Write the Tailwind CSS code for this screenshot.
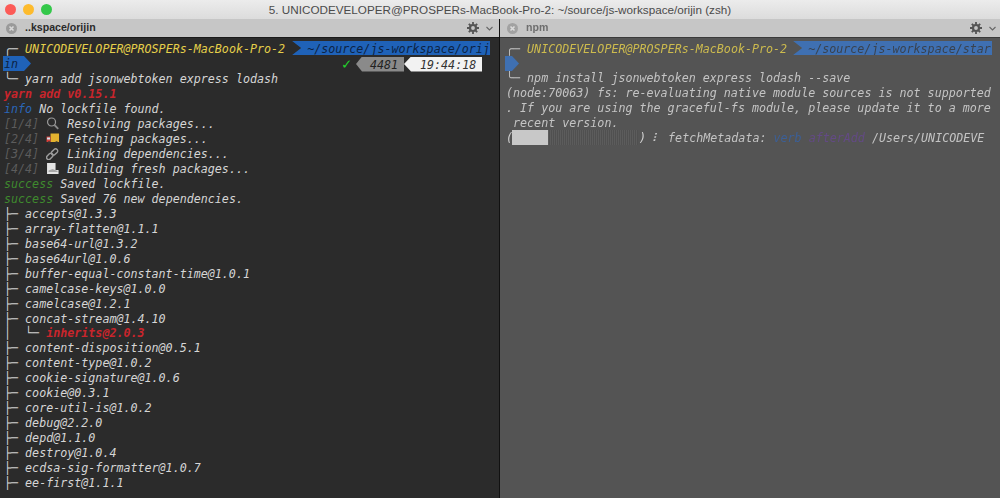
<!doctype html>
<html lang="en">
<head>
  <meta charset="utf-8" />
  <title>iTerm split panes</title>
  <script src="https://cdn.jsdelivr.net/npm/@tailwindcss/browser@4"></script>
</head>
<body class="bg-[#2b2b2b] overflow-hidden">
  <div class="w-[1000px] h-[498px] flex flex-col overflow-hidden blur-[0.35px]">
    <!-- title bar -->
    <div class="relative h-[19px] shrink-0 flex items-center justify-center bg-gradient-to-b from-[#ececec] to-[#dcdcdc] font-['Liberation_Sans',sans-serif] text-[11.7px] text-[#4b4b4b]">
      <div class="absolute left-[5px] top-[4px] flex gap-[7px]">
        <span class="w-[11px] h-[11px] rounded-full bg-[#fc5b57]"></span>
        <span class="w-[11px] h-[11px] rounded-full bg-[#fdbb2d]"></span>
        <span class="w-[11px] h-[11px] rounded-full bg-[#34c84a]"></span>
      </div>
      5. UNICODEVELOPER@PROSPERs-MacBook-Pro-2: ~/source/js-workspace/orijin (zsh)
    </div>

    <div class="flex-1 grid grid-cols-[500px_500px] min-h-0">
      <!-- left pane -->
      <div class="flex flex-col min-h-0 border-r border-[#111]">
        <div class="h-[19px] shrink-0 flex items-center bg-[#c6c6c6] border-b border-[#1a1a1a] pl-[6px] pr-[6px] font-['Liberation_Sans',sans-serif] text-[10.6px] font-bold text-[#2a2a2a]">
          <svg class="w-[11px] h-[11px] shrink-0" viewBox="0 0 11 11"><circle cx="5.5" cy="5.5" r="5.5" fill="#9a9a9a"/><path d="M3.5 3.5l4 4M7.5 3.5l-4 4" stroke="#d8d8d8" stroke-width="1.6"/></svg>
          <span class="ml-[8px]">..kspace/orijin</span>
          <svg class="ml-auto w-[12px] h-[12px]" viewBox="0 0 12 12"><circle cx="6" cy="6" r="3" fill="none" stroke="#555" stroke-width="2.2"/><path d="M6 0v2.5M6 9.5V12M0 6h2.5M9.5 6H12M1.8 1.8l1.8 1.8M8.4 8.4l1.8 1.8M10.2 1.8L8.4 3.6M3.6 8.4l-1.8 1.8" stroke="#555" stroke-width="1.8"/></svg>
          <svg class="ml-[7px] w-[7px] h-[5px]" viewBox="0 0 7 5"><path d="M.5 1l3 3 3-3" fill="none" stroke="#666" stroke-width="1.1"/></svg>
        </div>
        <div class="flex-1 min-h-0 overflow-hidden bg-[#2b2b2b] pl-[4px] pt-[4px] font-['DejaVu_Sans_Mono',monospace] italic text-[11.68px] leading-[14.97px] [&>div]:whitespace-pre text-[#d6d6d6]">
          <div class="flex h-[15px]">
            <span>╭─ <span class="text-[#e6d04a]">UNICODEVELOPER@PROSPERs-MacBook-Pro-2</span> </span>
            <span class="h-[14px] -mt-[1px] pt-[1px] pl-[15px] w-[198px] bg-[#1f62b8] text-[#0c2344] [clip-path:polygon(0_0,100%_0,100%_100%,0_100%,9px_50%)]">~/source/js-workspace/orij</span>
          </div>
          <div class="flex h-[15px]">
            <span class="-ml-[1px] -mt-[1px] pt-[1px] h-[15px] pl-[1px] w-[28px] bg-[#1f62b8] text-[#0c2344] [clip-path:polygon(0_0,75%_0,100%_50%,75%_100%,0_100%)]">in</span>
            <div class="ml-auto mr-[17px] -mt-[1px] flex items-center not-italic">
              <span class="mr-[5px] text-[#22d32b] font-bold text-[15px]">✓</span>
              <span class="w-[48px] h-[15px] pt-[1px] pl-[14px] bg-[#8a8a8a] text-[#222] italic [clip-path:polygon(0_50%,6px_0,100%_0,100%_100%,6px_100%)]">4481</span>
              <span class="w-[78px] h-[15px] pt-[1px] pl-[16px] bg-[#f2f2f2] text-[#333] italic [clip-path:polygon(0_50%,7px_0,100%_0,100%_100%,7px_100%)]">19:44:18</span>
            </div>
          </div>
          <div>╰─ yarn add jsonwebtoken express lodash</div>
          <div class="text-[#c8252c] font-bold">yarn add v0.15.1</div>
          <div><span class="text-[#2a66b8]">info</span> No lockfile found.</div>
          <div><span class="text-[#5c5c5c]">[1/4]</span> <svg class="inline-block w-[21.1px] h-[13px] align-[-2px]" viewBox="0 0 21 13"><circle cx="5.5" cy="5" r="4" fill="none" stroke="#9a9a9a" stroke-width="1.2"/><path d="M8.4 8l3.8 3.8" stroke="#8a8a8a" stroke-width="1.8"/></svg>Resolving packages...</div>
          <div><span class="text-[#5c5c5c]">[2/4]</span> <svg class="inline-block w-[21.1px] h-[13px] align-[-2px]" viewBox="0 0 21 13"><path d="M4.5 1.5h8.5v8.5H4.5z" fill="#e3b22f"/><path d="M0.5 4.5h4V10h-4z" fill="#d8403a"/><path d="M1 5.5h3v2H1z" fill="#cfe3ee"/><circle cx="3" cy="10.5" r="1.3" fill="#333"/><circle cx="10.5" cy="10.5" r="1.3" fill="#333"/></svg>Fetching packages...</div>
          <div><span class="text-[#5c5c5c]">[3/4]</span> <svg class="inline-block w-[21.1px] h-[13px] align-[-2px]" viewBox="1 0 19 11.8"><path d="M2 8.2l2-2a1.9 1.9 0 0 1 2.7 2.7l-2 2a1.9 1.9 0 0 1-2.7-2.7zM6.3 4.2l2-2a1.9 1.9 0 0 1 2.7 2.7l-2 2a1.9 1.9 0 0 1-2.7-2.7z" fill="none" stroke="#9c9c9c" stroke-width="1.3"/></svg>Linking dependencies...</div>
          <div><span class="text-[#5c5c5c]">[4/4]</span> <svg class="inline-block w-[21.1px] h-[13px] align-[-2px]" viewBox="0 0 21 13"><path d="M1 1h8.5v7H12.5v4H1z" fill="#e4e4e4"/><path d="M2.5 8.5l4-1.5 5 2v1H2.5z" fill="#a8a8a8"/></svg>Building fresh packages...</div>
          <div><span class="text-[#3f8a2e]">success</span> Saved lockfile.</div>
          <div><span class="text-[#3f8a2e]">success</span> Saved 76 new dependencies.</div>
          <div>├─ accepts@1.3.3</div>
          <div>├─ array-flatten@1.1.1</div>
          <div>├─ base64-url@1.3.2</div>
          <div>├─ base64url@1.0.6</div>
          <div>├─ buffer-equal-constant-time@1.0.1</div>
          <div>├─ camelcase-keys@1.0.0</div>
          <div>├─ camelcase@1.2.1</div>
          <div>├─ concat-stream@1.4.10</div>
          <div>│  └─ <span class="text-[#c8252c] font-bold">inherits@2.0.3</span></div>
          <div>├─ content-disposition@0.5.1</div>
          <div>├─ content-type@1.0.2</div>
          <div>├─ cookie-signature@1.0.6</div>
          <div>├─ cookie@0.3.1</div>
          <div>├─ core-util-is@1.0.2</div>
          <div>├─ debug@2.2.0</div>
          <div>├─ depd@1.1.0</div>
          <div>├─ destroy@1.0.4</div>
          <div>├─ ecdsa-sig-formatter@1.0.7</div>
          <div>├─ ee-first@1.1.1</div>
        </div>
      </div>

      <!-- right pane -->
      <div class="flex flex-col min-h-0">
        <div class="h-[19px] shrink-0 flex items-center bg-[#c6c6c6] border-b border-[#3a3a3a] pl-[7px] pr-[4px] font-['Liberation_Sans',sans-serif] text-[10.6px] font-bold text-[#6e6e6e]">
          <svg class="w-[11px] h-[11px] shrink-0" viewBox="0 0 11 11"><circle cx="5.5" cy="5.5" r="5.5" fill="#a2a2a2"/><path d="M3.5 3.5l4 4M7.5 3.5l-4 4" stroke="#dcdcdc" stroke-width="1.6"/></svg>
          <span class="ml-[8px]">npm</span>
          <svg class="ml-auto w-[12px] h-[12px]" viewBox="0 0 12 12"><circle cx="6" cy="6" r="3" fill="none" stroke="#555" stroke-width="2.2"/><path d="M6 0v2.5M6 9.5V12M0 6h2.5M9.5 6H12M1.8 1.8l1.8 1.8M8.4 8.4l1.8 1.8M10.2 1.8L8.4 3.6M3.6 8.4l-1.8 1.8" stroke="#555" stroke-width="1.8"/></svg>
          <svg class="ml-[7px] w-[7px] h-[5px]" viewBox="0 0 7 5"><path d="M.5 1l3 3 3-3" fill="none" stroke="#666" stroke-width="1.1"/></svg>
        </div>
        <div class="flex-1 min-h-0 overflow-hidden bg-[#545454] pl-[6px] pt-[4px] font-['DejaVu_Sans_Mono',monospace] italic text-[11.68px] leading-[14.97px] [&>div]:whitespace-pre text-[#c4c4c4]">
          <div class="flex h-[15px]">
            <span>╭─ <span class="text-[#cdbb4e]">UNICODEVELOPER@PROSPERs-MacBook-Pro-2</span> </span>
            <span class="h-[14px] -mt-[1px] pt-[1px] pl-[15px] w-[199px] -ml-[1px] bg-[#3f70b2] text-[#39424f] [clip-path:polygon(0_0,100%_0,100%_100%,0_100%,9px_50%)]">~/source/js-workspace/star</span>
          </div>
          <div class="h-[15px]"><span class="block -ml-[1px] -mt-[1px] w-[14px] h-[15px] bg-[#3f70b2] [clip-path:polygon(0_0,50%_0,100%_50%,50%_100%,0_100%)]"></span></div>
          <div>╰─ npm install jsonwebtoken express lodash --save</div>
          <div>(node:70063) fs: re-evaluating native module sources is not supported</div>
          <div>. If you are using the graceful-fs module, please update it to a more</div>
          <div> recent version.</div>
          <div class="flex items-center h-[15px]">
            <span class="text-[#d0d0d0]">(</span><span class="h-[15px] w-[36px] -ml-[1px] -mt-[1px] bg-[#c8c8c8]"></span><span class="h-[15px] w-[90px] -mt-[1px] bg-[repeating-linear-gradient(90deg,#5c5c5c_0_1px,#505050_1px_2px)]"></span><span class="ml-[1px] text-[#d0d0d0]">)</span><span class="ml-[2px]">⠸</span><span class="ml-[4px]"> fetchMetadata: <span class="text-[#3c5f96]">verb</span> <span class="text-[#634a85]">afterAdd</span> /Users/UNICODEVE</span>
          </div>
        </div>
      </div>
    </div>
  </div>
</body>
</html>
